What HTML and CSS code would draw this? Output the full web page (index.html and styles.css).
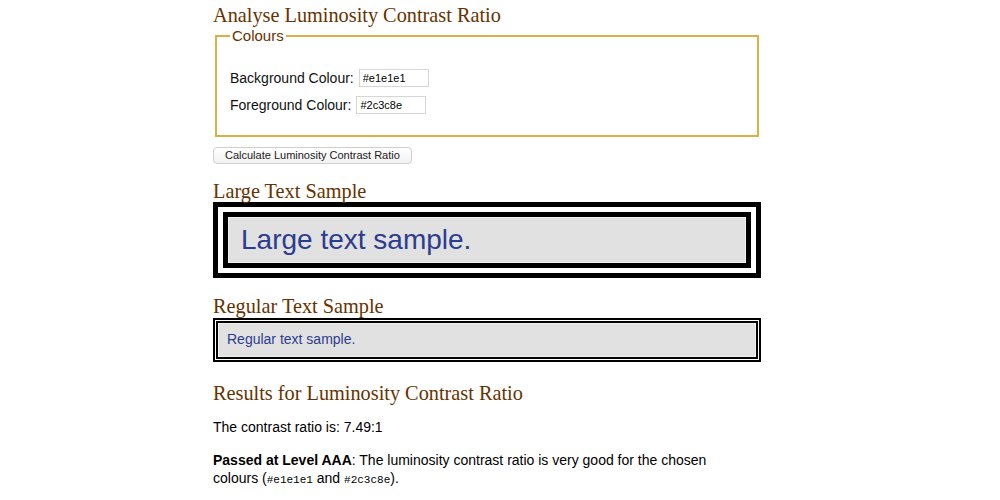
FILE: index.html
```html
<!DOCTYPE html>
<html lang="en">
<head>
<meta charset="utf-8">
<title>Analyse Luminosity Contrast Ratio</title>
<link rel="stylesheet" href="styles.css">
</head>
<body>
<main class="page">
  <h1 class="title">Analyse Luminosity Contrast Ratio</h1>
  <form class="form">
    <fieldset class="colours">
      <legend class="colours-legend">Colours</legend>
      <div class="row"><label class="label" for="bg">Background Colour:</label> <input class="field" id="bg" type="text" value="#e1e1e1"></div>
      <div class="row"><label class="label" for="fg">Foreground Colour:</label> <input class="field" id="fg" type="text" value="#2c3c8e"></div>
    </fieldset>
    <button class="calc" type="button">Calculate Luminosity Contrast Ratio</button>
  </form>

  <h2 class="section large-head">Large Text Sample</h2>
  <div class="sample sample-large"><div class="sample-inner large-inner">Large text sample.</div></div>

  <h2 class="section regular-head">Regular Text Sample</h2>
  <div class="sample sample-regular"><div class="sample-inner regular-inner">Regular text sample.</div></div>

  <h2 class="section results-head">Results for Luminosity Contrast Ratio</h2>
  <p class="result">The contrast ratio is: 7.49:1</p>
  <p class="result"><strong>Passed at Level AAA</strong>: The luminosity contrast ratio is very good for the chosen colours (<code class="code">#e1e1e1</code> and <code class="code">#2c3c8e</code>).</p>
</main>
</body>
</html>
```

FILE: styles.css
```css
html, body {
  margin: 0;
  padding: 0;
  background: #ffffff;
}

body {
  font-family: "Liberation Sans", Arial, sans-serif;
  font-size: 14px;
  color: #000;
}

.page {
  width: 548px;
  margin-left: 213px;
  padding-top: 3px;
}

.title,
.section {
  font-family: "Liberation Serif", "Times New Roman", serif;
  font-weight: normal;
  color: #663300;
  font-size: 20.3px;
  line-height: 24px;
  margin: 0;
}

.form {
  margin: 0;
}

.colours {
  margin: 0 2px;
  border: 2px solid #dcb043;
  padding: 0 13px 17px 13px;
}

.colours-legend {
  font-size: 15px;
  line-height: 18px;
  color: #663300;
  padding: 0 2px;
}

.row {
  height: 27px;
  display: flex;
  align-items: center;
}

.row:first-of-type {
  margin-top: 19px;
}

.label {
  font-size: 14px;
  color: #111;
  margin-right: 5px;
}

.field {
  box-sizing: border-box;
  width: 70px;
  height: 18px;
  border: 1px solid #d6d6d6;
  padding: 0 3px;
  font-family: "Liberation Sans", Arial, sans-serif;
  font-size: 11px;
  color: #000;
  margin: 0;
}

.calc {
  display: block;
  margin: 10px 0 0 0;
  font-family: "Liberation Sans", Arial, sans-serif;
  font-size: 11px;
  line-height: 13px;
  color: #222;
  background: linear-gradient(#ffffff, #f2f2f2);
  border: 1px solid #cfcfcf;
  border-radius: 4px;
  padding: 1px 11px;
}

.large-head {
  margin-top: 16px;
  line-height: 22px;
}

.regular-head {
  margin-top: 17px;
  line-height: 22px;
}

.results-head {
  margin-top: 20px;
  line-height: 22px;
  margin-bottom: 14px;
}

.sample {
  border-style: double;
  border-color: #000;
  background: #fff;
}

.sample-large {
  border-width: 15px;
}

.sample-regular {
  margin-top: 1px;
  border-width: 5px;
}

.sample-inner {
  background: #e1e1e1;
  color: #2c3c8e;
  box-shadow: inset 0 0 0 1px #f2f2f2;
}

.large-inner {
  font-size: 28px;
  line-height: 32px;
  padding: 7px 13px 7px;
}

.regular-inner {
  font-size: 14px;
  line-height: 16px;
  padding: 8px 9px 10px;
}

.result {
  margin: 0 0 15px 0;
  line-height: 18px;
  max-width: 520px;
}

.code {
  font-family: "Liberation Mono", "Courier New", monospace;
  font-size: 11px;
  line-height: 14px;
}
```
